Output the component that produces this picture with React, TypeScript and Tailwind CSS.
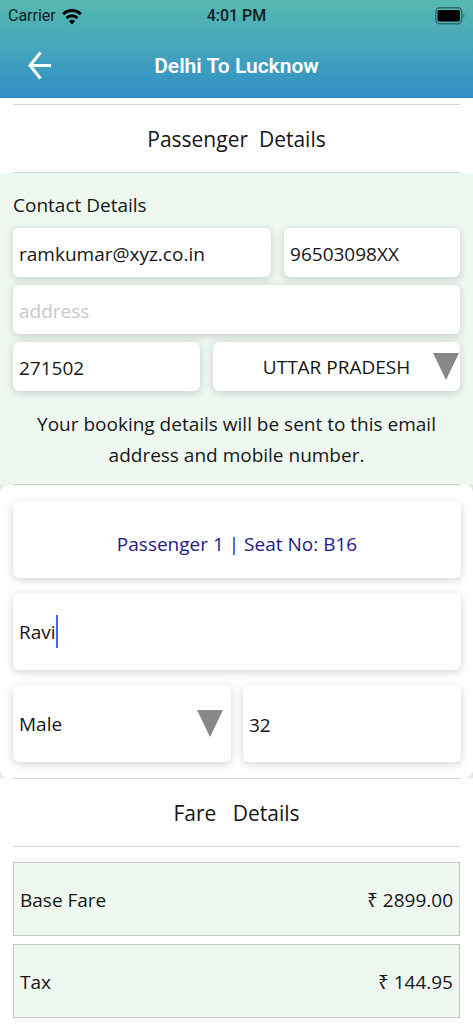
import type { ReactNode } from "react";

const FARES = [
  { label: "Base Fare", amount: "₹ 2899.00" },
  { label: "Tax", amount: "₹ 144.95" },
];

const STATES = ["UTTAR PRADESH", "DELHI", "BIHAR"];
const GENDERS = ["Male", "Female"];

const card = "rounded-md bg-white shadow-[0_2px_8px_rgba(0,0,0,0.18)]";
const contactField = `${card} h-[49px] w-full min-w-0 px-[6px] pt-[2px] outline-none placeholder:text-[#c7c7c7]`;
const passengerField = `${card} h-[77px] w-full min-w-0 px-[6px] pt-[2px] outline-none`;

function SectionHeading({ children }: { children: ReactNode }) {
  return (
    <h2 className="mx-[13px] flex h-[69px] items-center justify-center border-y border-[#d3d6d6] pt-[2px] text-[21px] whitespace-pre">
      {children}
    </h2>
  );
}

function Triangle({ className }: { className: string }) {
  return (
    <svg
      viewBox="0 0 26 27"
      className={`pointer-events-none absolute h-[27px] w-[26px] fill-[#888] ${className}`}
      aria-hidden="true"
    >
      <path d="M0 0h26L13 27z" />
    </svg>
  );
}

function StatusBar() {
  return (
    <div className="grid h-8 grid-cols-3 items-center px-2 font-[Roboto,sans-serif] text-[16px] text-[#10201f]">
      <span className="flex items-center gap-[6px]">
        Carrier
        <svg viewBox="0 0 20 17" className="h-[17px] w-[20px]" fill="none" stroke="#000" aria-hidden="true">
          <path d="M1.2 6.2a12.6 12.6 0 0 1 17.6 0" strokeWidth="3" />
          <path d="M4.5 10a7.9 7.9 0 0 1 11 0" strokeWidth="2.8" />
          <path d="M10 16.6l-3-3.4a4.4 4.4 0 0 1 6 0z" fill="#000" stroke="none" />
        </svg>
      </span>
      <span className="text-center font-medium">4:01 PM</span>
      <svg viewBox="0 0 30 18" className="h-[18px] w-[30px] justify-self-end" aria-hidden="true">
        <rect x="0.75" y="0.75" width="26" height="16" rx="4" fill="none" stroke="#2b6a66" strokeWidth="1.3" />
        <rect x="2.5" y="3" width="22.5" height="11.5" rx="1.5" fill="#000" />
        <path d="M28.3 6.5c1.6.8 1.6 3.8 0 4.6z" fill="#2b6a66" />
      </svg>
    </div>
  );
}

export default function App() {
  return (
    <div className="min-h-screen bg-white pb-[6px] font-['Open_Sans','Noto_Sans',sans-serif] text-[19px] text-[#161616]">
      <header className="bg-linear-to-b from-[#58b9b0] to-[#318fc5]">
        <StatusBar />
        <div className="grid h-[66px] grid-cols-[80px_1fr_80px] items-center pt-[2px]">
          <button type="button" aria-label="Back" className="ml-[26px] w-[28px]">
            <svg
              viewBox="0 0 28 30"
              className="h-[30px] w-[28px]"
              fill="none"
              stroke="#fff"
              strokeWidth="3"
              aria-hidden="true"
            >
              <path d="M14.5 1.5L4 14.5l10.5 13M3.5 14.5H25" />
            </svg>
          </button>
          <h1 className="pt-[2px] text-center font-[Roboto,sans-serif] text-[21px] font-semibold text-white">
            Delhi To Lucknow
          </h1>
        </div>
      </header>

      <main className="pt-[6px]">
        <SectionHeading>{"Passenger  Details"}</SectionHeading>

        <section className="bg-[#eef8f1] px-[13px]">
          <h3 className="pt-4 pb-[7px] leading-8">Contact Details</h3>
          <div className="grid gap-2">
            <div className="grid grid-cols-[22fr_15fr] gap-[13px]">
              <input aria-label="Email" type="email" defaultValue="ramkumar@xyz.co.in" className={contactField} />
              <input aria-label="Mobile number" type="tel" defaultValue="96503098XX" className={contactField} />
            </div>
            <input aria-label="Address" placeholder="address" className={contactField} />
            <div className="grid grid-cols-[25fr_33fr] gap-[13px]">
              <input aria-label="Pin code" inputMode="numeric" defaultValue="271502" className={contactField} />
              <div className="relative">
                <select aria-label="State" className={`${contactField} appearance-none text-center`}>
                  {STATES.map((state) => (
                    <option key={state}>{state}</option>
                  ))}
                </select>
                <Triangle className="top-[11px] right-px" />
              </div>
            </div>
          </div>
          <p className="border-b border-[#c6d0c9] pt-[18px] pb-[13px] text-center leading-[31px]">
            Your booking details will be sent to this email address and mobile number.
          </p>
        </section>

        <section className="bg-[#dfe7e1]">
          <div className="grid gap-[15px] rounded-lg bg-white py-4 pr-3 pl-[13px]">
            <h3 className={`${card} flex h-[77px] items-center justify-center pt-[10px] text-[#24188a]`}>
              Passenger 1 | Seat No: B16
            </h3>
            <label className={`${card} flex h-[77px] cursor-text items-center px-[6px]`}>
              <input
                aria-label="Name"
                defaultValue="Ravi"
                className="field-sizing-content pt-[2px] caret-[#3b6cf0] outline-none"
              />
              <span className="h-[33px] w-[2px] bg-[#3b6cf0]" />
            </label>
            <div className="grid grid-cols-2 gap-3">
              <div className="relative">
                <select aria-label="Gender" className={`${passengerField} appearance-none`}>
                  {GENDERS.map((gender) => (
                    <option key={gender}>{gender}</option>
                  ))}
                </select>
                <Triangle className="top-[25px] right-2" />
              </div>
              <input aria-label="Age" inputMode="numeric" defaultValue="32" className={passengerField} />
            </div>
          </div>
        </section>

        <SectionHeading>{"Fare   Details"}</SectionHeading>

        <dl className="mx-[13px] mt-[15px] grid gap-2">
          {FARES.map((fare) => (
            <div
              key={fare.label}
              className="flex h-[74px] items-center justify-between border border-[#c3c8c5] bg-[#eef8f1] px-[6px] pt-[2px]"
            >
              <dt>{fare.label}</dt>
              <dd>{fare.amount}</dd>
            </div>
          ))}
        </dl>
      </main>
    </div>
  );
}
